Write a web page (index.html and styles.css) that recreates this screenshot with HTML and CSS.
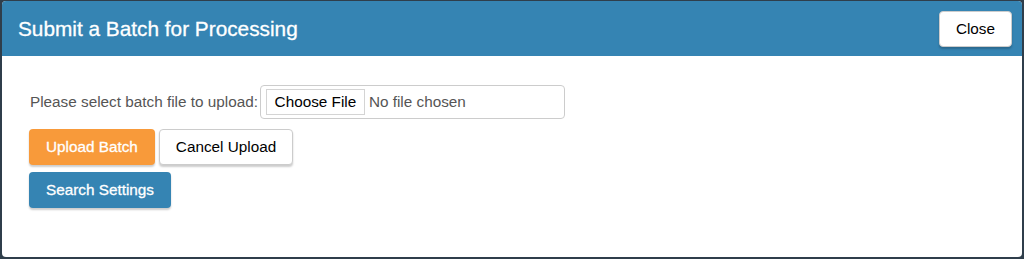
FILE: index.html
```html
<!DOCTYPE html>
<html lang="en">
  <head>
    <meta charset="UTF-8" />
    <meta name="viewport" content="width=device-width, initial-scale=1.0" />
    <title>Submit a Batch for Processing</title>
    <link rel="stylesheet" href="styles.css">
  </head>
  <body>
    <div class="modal">
      <div class="modal-header">
        <h1 class="modal-title">Submit a Batch for Processing</h1>
        <button class="btn btn-default btn-close">Close</button>
      </div>

      <div class="modal-body">
        <div class="upload-row">
          <label class="upload-label">Please select batch file to upload:</label>
          <div class="file-field">
            <span class="file-btn">Choose File</span>
            <span class="file-name">No file chosen</span>
          </div>
        </div>

        <div class="btn-row">
          <button class="btn btn-warning">Upload Batch</button>
          <button class="btn btn-default">Cancel Upload</button>
        </div>

        <div class="btn-row">
          <button class="btn btn-primary">Search Settings</button>
        </div>
      </div>
    </div>
  </body>
</html>
```

FILE: styles.css
```css
* {
  margin: 0;
  padding: 0;
  box-sizing: border-box;
}

body {
  font-family: "Liberation Sans", Arial, sans-serif;
  background: #2f3e4b;
  height: 100vh;
  padding: 1px 2px 2px 2px;
  overflow: hidden;
}

.modal {
  background: #fff;
  border-radius: 4px;
  height: 256px;
  overflow: hidden;
}

.modal-header {
  background: #3584b3;
  height: 55px;
  display: flex;
  align-items: center;
  justify-content: space-between;
  padding: 0 10px 0 16px;
}

.modal-title {
  color: #fff;
  font-size: 20.8px;
  font-weight: normal;
  -webkit-text-stroke: 0.3px #fff;
}

.btn {
  font-family: inherit;
  font-size: 15.3px;
  height: 36px;
  padding: 0 16px;
  border: 1px solid transparent;
  border-radius: 4px;
  cursor: pointer;
  box-shadow: 0 2px 2px rgba(0, 0, 0, 0.2);
}

.btn-default {
  background: #fff;
  border-color: #ccc;
  color: #000;
}

.btn-close {
  padding: 0 16px;
}

.btn-warning {
  background: #f89a3a;
  color: #fff;
  -webkit-text-stroke: 0.3px #fff;
}

.btn-primary {
  background: #3584b3;
  color: #fff;
  -webkit-text-stroke: 0.3px #fff;
}

.modal-body {
  padding: 29px 27px;
}

.upload-row {
  display: flex;
  align-items: center;
  margin-bottom: 10px;
}

.upload-label {
  font-size: 15.3px;
  color: #555;
  margin-left: 1px;
  margin-right: 2px;
}

.file-field {
  width: 305px;
  height: 34px;
  border: 1px solid #ccc;
  border-radius: 4px;
  display: flex;
  align-items: center;
  padding-left: 5px;
  font-size: 15.3px;
}

.file-btn {
  height: 26px;
  width: 99px;
  border: 1px solid #d4d4d4;
  display: flex;
  align-items: center;
  justify-content: center;
  color: #000;
  margin-right: 4px;
}

.file-name {
  color: #555;
}

.btn-row {
  display: flex;
  gap: 4px;
  margin-bottom: 7px;
}
```
